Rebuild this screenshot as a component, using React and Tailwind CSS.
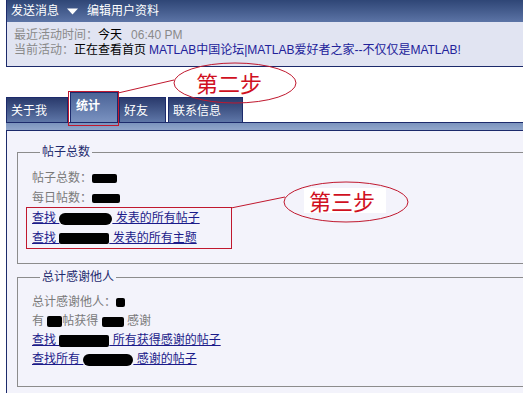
const font = { fontFamily: '"Liberation Sans", "Noto Sans CJK SC", sans-serif' };

function Blob({ w, h = 10, round = false }) {
  return (
    <span
      className={`inline-block bg-black align-middle ${round ? "rounded-full" : "rounded-[2px]"}`}
      style={{ width: w, height: h }}
    />
  );
}

function Tab({ label, active }) {
  if (active) {
    return (
      <div className="h-[30px] w-[48px] border border-[#1c2a6b] border-b-0 bg-gradient-to-b from-[#4c6497] to-[#7a92c0] pl-[5px] pt-[3px] text-[12px] font-bold text-white leading-[20px]">
        {label}
      </div>
    );
  }
  return (
    <div className="h-[25px] border border-[#1c2a6b] border-b-0 bg-gradient-to-b from-[#2a3a6c] to-[#5f77a8] pl-[4px] pr-[10px] pt-[3px] text-[12px] text-white leading-[20px]">
      {label}
    </div>
  );
}

export default function App() {
  return (
    <div className="relative h-[393px] w-[523px] overflow-hidden bg-white text-[12px]" style={font}>
      <div className="w-[560px] pl-[6px]">
        {/* top profile box */}
        <div className="border-x border-b border-[#1c2a6b]">
          <div className="flex h-[22px] items-center gap-[8px] bg-gradient-to-b from-[#2f4676] to-[#5c74a6] pl-[4px] text-white">
            <span>发送消息</span>
            <svg width="11" height="7" viewBox="0 0 11 7">
              <path d="M0 0.5 H11 L5.5 6.5 Z" fill="#ffffff" />
            </svg>
            <span className="ml-[1px]">编辑用户资料</span>
          </div>
          <div className="bg-[#e1e4f2] pl-[7px] pt-[6px] pb-[8px] leading-[15px]">
            <div className="flex text-[#8a8a8a]">
              <span>最近活动时间：</span>
              <span className="text-black">今天</span>
              <span className="ml-[9px]">06:40 PM</span>
            </div>
            <div className="flex text-[#8a8a8a]">
              <span>当前活动：</span>
              <span className="text-black">正在查看首页</span>
              <span className="ml-[3px] text-[#22229a]">MATLAB中国论坛|MATLAB爱好者之家--不仅仅是MATLAB!</span>
            </div>
          </div>
        </div>

        {/* tabs */}
        <div className="mt-[25px] flex items-end gap-[1px]">
          <div className="w-[62px]"><Tab label="关于我" /></div>
          <div className="ml-[1px]"><Tab label="统计" active /></div>
          <div className="w-[47px]"><Tab label="好友" /></div>
          <div className="ml-[1px] w-[75px]"><Tab label="联系信息" /></div>
        </div>
        <div className="h-[9px] border-y border-[#1c2a6b] bg-gradient-to-b from-[#7b93bd] to-[#91a6cb]" />

        {/* content */}
        <div className="h-[300px] border-l border-[#1c2a6b] bg-[#f3f3fb] px-[10px] pt-[11px]">
          <fieldset className="border border-[#8c8c8c] px-[14px] pt-[6px] pb-[15px] leading-[20px]">
            <legend className="ml-[8px] px-[2px] text-[#1e2a6e]">帖子总数</legend>
            <div className="text-[#7a7a7a]">
              帖子总数：<Blob w={25} h={9} />
            </div>
            <div className="text-[#7a7a7a]">
              每日帖数：<Blob w={28} h={9} />
            </div>
            <div className="text-[#1b1b8a] underline">
              查找 <Blob w={53} h={12} round /> 发表的所有帖子
            </div>
            <div className="text-[#1b1b8a] underline">
              查找 <Blob w={50} h={11} /> 发表的所有主题
            </div>
          </fieldset>

          <fieldset className="mt-[4px] border border-[#8c8c8c] px-[14px] pt-[6px] pb-[17px] leading-[19px]">
            <legend className="ml-[8px] px-[2px] text-[#1e2a6e]">总计感谢他人</legend>
            <div className="text-[#7a7a7a]">
              总计感谢他人：<Blob w={9} h={9} />
            </div>
            <div className="text-[#7a7a7a]">
              有 <Blob w={15} h={11} />帖获得 <Blob w={22} h={10} /> 感谢
            </div>
            <div className="text-[#1b1b8a] underline">
              查找 <Blob w={50} h={12} /> 所有获得感谢的帖子
            </div>
            <div className="text-[#1b1b8a] underline">
              查找所有 <Blob w={50} h={12} round /> 感谢的帖子
            </div>
          </fieldset>
        </div>
      </div>

      {/* annotations */}
      <svg className="pointer-events-none absolute left-0 top-0" width="523" height="393">
        <rect x="68.5" y="91.5" width="50" height="34" fill="none" stroke="#c0182e" strokeWidth="1" />
        <line x1="118" y1="93" x2="174" y2="80" stroke="#c0182e" strokeWidth="1" />
        <ellipse cx="235" cy="83" rx="61" ry="20" fill="none" stroke="#c0182e" strokeWidth="1" />
        <text x="229" y="92" textAnchor="middle" fontSize="22" fill="#d0101e" style={font}>第二步</text>

        <rect x="26.5" y="207.5" width="205" height="41" fill="none" stroke="#c0182e" strokeWidth="1" />
        <line x1="231" y1="208" x2="285" y2="197" stroke="#c0182e" strokeWidth="1" />
        <ellipse cx="346" cy="202" rx="62" ry="20" fill="none" stroke="#c0182e" strokeWidth="1" />
        <rect x="304" y="188" width="82" height="25" fill="#ffffff" />
        <text x="342" y="210" textAnchor="middle" fontSize="22" fill="#d0101e" style={font}>第三步</text>
      </svg>
    </div>
  );
}
